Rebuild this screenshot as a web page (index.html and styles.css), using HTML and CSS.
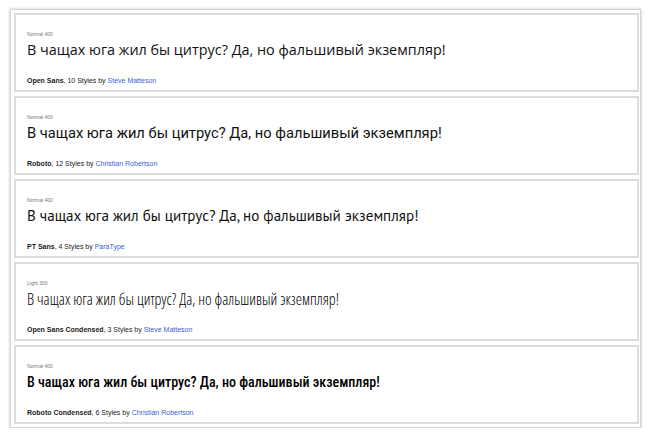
FILE: index.html
```html
<!DOCTYPE html>
<html lang="ru">
<head>
  <meta charset="UTF-8" />
  <title>Fonts</title>
  <link rel="stylesheet" href="styles.css">
</head>
<body>
  <div class="frame">
    <div class="card">
      <p class="style-name">Normal 400</p>
      <p class="sample open-sans">В чащах юга жил бы цитрус? Да, но фальшивый экземпляр!</p>
      <p class="meta"><b>Open Sans</b>, 10 Styles by <a href="#">Steve Matteson</a></p>
    </div>
    <div class="card">
      <p class="style-name">Normal 400</p>
      <p class="sample roboto">В чащах юга жил бы цитрус? Да, но фальшивый экземпляр!</p>
      <p class="meta"><b>Roboto</b>, 12 Styles by <a href="#">Christian Robertson</a></p>
    </div>
    <div class="card">
      <p class="style-name">Normal 400</p>
      <p class="sample pt-sans">В чащах юга жил бы цитрус? Да, но фальшивый экземпляр!</p>
      <p class="meta"><b>PT Sans</b>, 4 Styles by <a href="#">ParaType</a></p>
    </div>
    <div class="card">
      <p class="style-name">Light 300</p>
      <p class="sample open-sans-cond">В чащах юга жил бы цитрус? Да, но фальшивый экземпляр!</p>
      <p class="meta"><b>Open Sans Condensed</b>, 3 Styles by <a href="#">Steve Matteson</a></p>
    </div>
    <div class="card">
      <p class="style-name">Normal 400</p>
      <p class="sample roboto-cond">В чащах юга жил бы цитрус? Да, но фальшивый экземпляр!</p>
      <p class="meta"><b>Roboto Condensed</b>, 6 Styles by <a href="#">Christian Robertson</a></p>
    </div>
  </div>
</body>
</html>
```

FILE: styles.css
```css
body {
  margin: 0;
  background-color: #ffffff;
  font-family: "Liberation Sans", Arial, sans-serif;
  color: #111;
}
.frame {
  margin: 9px 9px 0 10px;
  padding: 3px 1px 3px 3px;
  border: 1px solid #d4d4d4;
  box-shadow: 0 0 3px rgba(0, 0, 0, 0.25);
  display: flex;
  flex-direction: column;
  gap: 4px;
}
.card {
  height: 75px;
  border: 2px solid #dcdcdc;
  padding: 0 11px;
  display: flex;
  flex-direction: column;
}
.card p {
  margin: 0;
  white-space: nowrap;
}
.style-name {
  margin-top: 16px !important;
  font-size: 5px;
  line-height: 6px;
  color: #777;
}
.sample {
  margin-top: 2px !important;
  line-height: 22px;
  color: #111;
}
.open-sans {
  font-family: "Open Sans", sans-serif;
  font-size: 14.4px;
}
.roboto {
  font-family: Roboto, sans-serif;
  font-size: 14.7px;
}
.pt-sans {
  font-family: "PT Sans", Lato, sans-serif;
  font-size: 15.1px;
}
.open-sans-cond {
  font-family: "Open Sans", sans-serif;
  font-weight: 300;
  font-stretch: 75%;
  font-size: 15.8px;
  color: #000;
}
.roboto-cond {
  font-family: "Roboto Condensed", Roboto, sans-serif;
  font-weight: 500;
  font-size: 14px;
  color: #000;
}
.meta {
  margin-top: auto !important;
  margin-bottom: 5px !important;
  font-size: 7px;
  line-height: 9px;
  color: #222;
}
.meta a {
  color: #3a5fd6;
  text-decoration: none;
}
```
